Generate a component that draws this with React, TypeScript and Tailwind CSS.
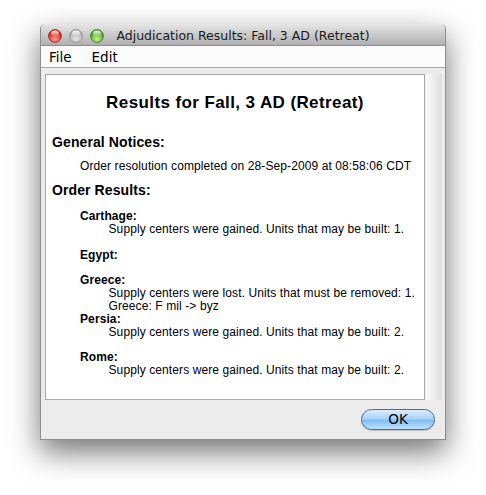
import React from "react";

function Light({ id, c1, c2, stroke }: { id: string; c1: string; c2: string; stroke: string }) {
  return (
    <svg width="14" height="14" viewBox="0 0 14 14">
      <defs>
        <radialGradient id={`g-${id}`} cx="50%" cy="75%" r="65%">
          <stop offset="0%" stopColor={c1} />
          <stop offset="100%" stopColor={c2} />
        </radialGradient>
        <linearGradient id={`h-${id}`} x1="0" y1="0" x2="0" y2="1">
          <stop offset="0%" stopColor="#ffffff" stopOpacity="0.95" />
          <stop offset="100%" stopColor="#ffffff" stopOpacity="0.1" />
        </linearGradient>
      </defs>
      <circle cx="7" cy="7" r="6.4" fill={`url(#g-${id})`} stroke={stroke} strokeWidth="0.9" />
      <ellipse cx="7" cy="4.2" rx="4" ry="2.6" fill={`url(#h-${id})`} />
    </svg>
  );
}

const rows: { t: string; b?: boolean }[] = [
  { t: "Carthage:", b: true },
  { t: "Supply centers were gained. Units that may be built: 1." },
  { t: "" },
  { t: "Egypt:", b: true },
  { t: "" },
  { t: "Greece:", b: true },
  { t: "Supply centers were lost. Units that must be removed: 1." },
  { t: "Greece: F mil -> byz" },
  { t: "Persia:", b: true },
  { t: "Supply centers were gained. Units that may be built: 2." },
  { t: "" },
  { t: "Rome:", b: true },
  { t: "Supply centers were gained. Units that may be built: 2." },
];

export default function App() {
  return (
    <div className="w-[486px] h-[495px] bg-white overflow-hidden pt-[24px] pl-[40px]">
      <div className="w-[406px] h-[416px] flex flex-col rounded-t-[5px] border-x border-b border-[#8e8e8e] shadow-[0_12px_30px_rgba(0,0,0,0.55)] bg-[#ececec]">
        {/* Title bar */}
        <div className="h-[22px] shrink-0 grid grid-cols-[1fr_auto_1fr] items-center rounded-t-[5px] bg-gradient-to-b from-[#e6e6e6] to-[#b0b0b0] border-b border-[#8d8d8d]">
          <div className="flex items-center gap-[7px] pl-[7px] pt-[1px]">
            <Light id="r" c1="#ff9a8f" c2="#cf1a10" stroke="#9a2a22" />
            <Light id="y" c1="#e6e6e6" c2="#aeaeae" stroke="#8f8f8f" />
            <Light id="g" c1="#c4f58c" c2="#3f9b1c" stroke="#3c7a26" />
          </div>
          <div
            className="text-[12.5px] text-[#1a1a1a] leading-[22px] whitespace-nowrap pt-[1px]"
            style={{ fontFamily: '"DejaVu Sans", sans-serif' }}
          >
            Adjudication Results: Fall, 3 AD (Retreat)
          </div>
          <div />
        </div>

        {/* Menu bar */}
        <div
          className="h-[22px] shrink-0 flex items-center gap-[20px] pl-[8px] pt-[1px] bg-[#fbfbfb] border-b border-[#a6a6a6] text-[13.5px] text-black"
          style={{ fontFamily: '"DejaVu Sans", sans-serif' }}
        >
          <span>File</span>
          <span>Edit</span>
        </div>

        {/* Content */}
        <div className="flex-1 flex flex-col">
          <div className="flex pt-[6px] pl-[4px]">
            <div
              className="w-[380px] h-[326px] border border-[#a9a9a9] bg-white text-black pt-[18px]"
              style={{ fontFamily: '"Liberation Sans", Arial, sans-serif' }}
            >
              <div className="text-center text-[17px] leading-[20px] font-bold tracking-[0.4px]">
                Results for Fall, 3 AD (Retreat)
              </div>
              <div className="mt-[21px] pl-[6px] text-[14px] leading-[16px] font-bold tracking-[0.1px]">
                General Notices:
              </div>
              <div className="mt-[9px] pl-[34px] text-[12px] leading-[14px] tracking-[0.1px]">
                Order resolution completed on 28-Sep-2009 at 08:58:06 CDT
              </div>
              <div className="mt-[9px] pl-[6px] text-[14px] leading-[16px] font-bold tracking-[0.1px]">
                Order Results:
              </div>
              <div className="mt-[12px] text-[12px] tracking-[0.1px]">
                {rows.map((r, i) => (
                  <div
                    key={i}
                    className={
                      r.b
                        ? "h-[12.85px] leading-[12.85px] pl-[34px] font-bold whitespace-nowrap"
                        : "h-[12.85px] leading-[12.85px] pl-[62.5px] whitespace-nowrap"
                    }
                  >
                    {r.t}
                  </div>
                ))}
              </div>
            </div>
            <div className="ml-[1px] w-[16px] h-[326px] bg-gradient-to-r from-[#fbfbfb] to-[#dfdfdf]" />
          </div>
          <div className="flex-1 flex justify-end items-start pt-[9px] pr-[10px]">
            <button
              className="w-[74px] h-[21px] rounded-full border border-[#4d6c96] bg-[linear-gradient(to_bottom,#dbeeff_0%,#a8d3f7_45%,#82bff2_55%,#bde1ff_100%)] shadow-[0_1px_1px_rgba(0,0,0,0.2)] text-[13.5px] leading-[19px] text-black"
              style={{ fontFamily: '"DejaVu Sans", sans-serif' }}
            >
              OK
            </button>
          </div>
        </div>
      </div>
    </div>
  );
}
